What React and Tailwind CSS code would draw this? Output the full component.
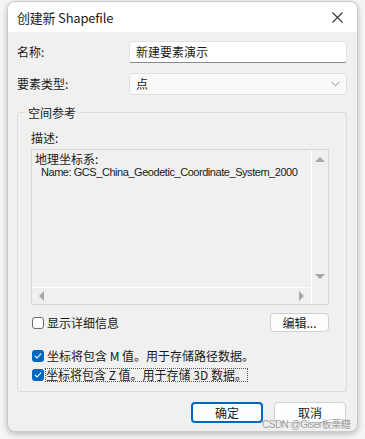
const font = { fontFamily: '"Noto Sans CJK SC", "Noto Sans", sans-serif' };

function Check({ checked }) {
  if (!checked) {
    return <span className="w-[12px] h-[12px] rounded-[3px] border border-[#6b6b6b] bg-white shrink-0" />;
  }
  return (
    <span className="w-[12px] h-[12px] rounded-[3px] bg-[#0067c0] shrink-0 flex items-center justify-center">
      <svg width="8" height="8" viewBox="0 0 8 8" fill="none">
        <path d="M1.2 4.2 L3.1 6 L6.8 1.8" stroke="white" strokeWidth="1.1" strokeLinecap="round" strokeLinejoin="round" />
      </svg>
    </span>
  );
}

function Arrow({ dir }) {
  const pts = {
    up: '0,6 5,1 10,6',
    down: '0,1 5,6 10,1',
    left: '6,0 1,5 6,10',
    right: '1,0 6,5 1,10',
  }[dir];
  const vertical = dir === 'up' || dir === 'down';
  return (
    <svg width={vertical ? 10 : 7} height={vertical ? 7 : 10} viewBox={vertical ? '0 0 10 7' : '0 0 7 10'}>
      <polygon points={pts} fill="#a6a6a6" />
    </svg>
  );
}

export default function App() {
  return (
    <div className="w-[365px] h-[439px] bg-[#f6f6f6] relative" style={font}>
      <div className="absolute left-[7px] top-[1px] w-[351px] h-[431px] rounded-[8px] overflow-hidden border border-[#c9c9c9] shadow-[0_2px_6px_rgba(0,0,0,0.25)] bg-[#f0f0f0] flex flex-col">
        {/* title bar */}
        <div className="h-[30px] bg-white flex items-center justify-between pl-[9px] pr-[14px] shrink-0">
          <span className="text-[13px] text-[#1b1b1b] leading-none tracking-[-0.2px]">创建新 Shapefile</span>
          <svg width="11" height="11" viewBox="0 0 11 11">
            <path d="M0.5 0.5 L10.5 10.5 M10.5 0.5 L0.5 10.5" stroke="#333" strokeWidth="1.1" />
          </svg>
        </div>

        <div className="flex-1 flex flex-col px-[9px] pt-[9px]">
          <div className="flex items-center h-[22px]">
            <span className="w-[112px] text-[12px] text-[#1a1a1a]">名称:</span>
            <div className="flex-1 mr-[1px] h-[22px] bg-white border border-[#e3e3e3] border-b-[#8a8a8a] rounded-[3px] flex items-center px-[6px] text-[12px] text-[#1a1a1a]">
              新建要素演示
            </div>
          </div>
          <div className="flex items-center h-[22px] mt-[10px]">
            <span className="w-[112px] text-[12px] text-[#1a1a1a]">要素类型:</span>
            <div className="flex-1 mr-[1px] h-[22px] bg-[#f9f9f9] border border-[#e0e0e0] rounded-[3px] flex items-center justify-between pl-[6px] pr-[6px] text-[12px] text-[#1a1a1a]">
              <span>点</span>
              <svg width="9" height="6" viewBox="0 0 9 6">
                <path d="M0.5 0.8 L4.5 4.8 L8.5 0.8" stroke="#8a8a8a" strokeWidth="1" fill="none" />
              </svg>
            </div>
          </div>

          <fieldset className="mt-[9px] mr-[1px] border border-[#dcdcdc] rounded-[2px] px-[13px] pb-[10px]">
            <legend className="ml-[-6px] px-[3px] text-[12px] text-[#1a1a1a] leading-[17px]">空间参考</legend>
            <div className="text-[12px] text-[#1a1a1a] leading-[16px] mt-[9px]">描述:</div>
            <div className="mt-[3px] mr-[4px] h-[156px] border border-[#d6d6d6] flex flex-col">
              <div className="flex-1 flex">
                <div className="flex-1 min-w-0 overflow-hidden border-r border-white pl-[3px] pt-[1px]">
                  <div className="text-[12px] leading-[15px] text-[#1a1a1a]">地理坐标系:</div>
                  <div className="pl-[6px] text-[11px] leading-[13px] text-[#1a1a1a] whitespace-nowrap tracking-[-0.45px]" style={{ fontFamily: '"Liberation Sans", Arial, sans-serif' }}>
                    Name: GCS_China_Geodetic_Coordinate_System_2000
                  </div>
                </div>
                <div className="w-[16px] flex flex-col items-center justify-between pt-[6px] pb-[7px]">
                  <Arrow dir="up" />
                  <Arrow dir="down" />
                </div>
              </div>
              <div className="h-[17px] flex">
                <div className="flex-1 border-t border-r border-white flex items-center justify-between px-[6px]">
                  <Arrow dir="left" />
                  <Arrow dir="right" />
                </div>
                <div className="w-[16px]" />
              </div>
            </div>

            <div className="flex items-center justify-between mt-[8px] mr-[4px]">
              <div className="flex items-center gap-[3px] ml-[1px]">
                <Check />
                <span className="text-[12px] text-[#1a1a1a]">显示详细信息</span>
              </div>
              <div className="w-[59px] h-[19px] bg-[#fdfdfd] border border-[#d0d0d0] rounded-[4px] flex items-center justify-center text-[12px] text-[#1a1a1a]">
                编辑...
              </div>
            </div>

            <div className="mt-[18px] flex flex-col gap-[7px] ml-[1px]">
              <div className="flex items-center gap-[3px] h-[12px]">
                <Check checked />
                <span className="text-[12px] text-[#1a1a1a]">坐标将包含 M 值。用于存储路径数据。</span>
              </div>
              <div className="flex items-center gap-[2px] h-[12px]">
                <Check checked />
                <span className="text-[12px] text-[#1a1a1a] leading-[12px] outline-1 outline-dotted outline-[#555]">坐标将包含 Z 值。用于存储 3D 数据。</span>
              </div>
            </div>
          </fieldset>

          <div className="flex justify-end gap-[11px] mt-[10px] mr-[2px]">
            <div className="w-[72px] h-[21px] bg-[#fdfdfd] border-2 border-[#0067c0] rounded-[4px] flex items-center justify-center text-[12px] text-[#1a1a1a]">
              确定
            </div>
            <div className="w-[72px] h-[21px] bg-[#fdfdfd] border border-[#d0d0d0] rounded-[4px] flex items-center justify-center text-[12px] text-[#1a1a1a]">
              取消
            </div>
          </div>
        </div>
      </div>
      <span className="absolute left-[262px] top-[418px] text-[10px] text-[#a0a0a0] leading-[14px] tracking-[-0.5px]" style={{ fontFamily: '"Liberation Sans", "Noto Sans CJK SC", sans-serif' }}>CSDN @Giser板栗糖</span>
    </div>
  );
}
